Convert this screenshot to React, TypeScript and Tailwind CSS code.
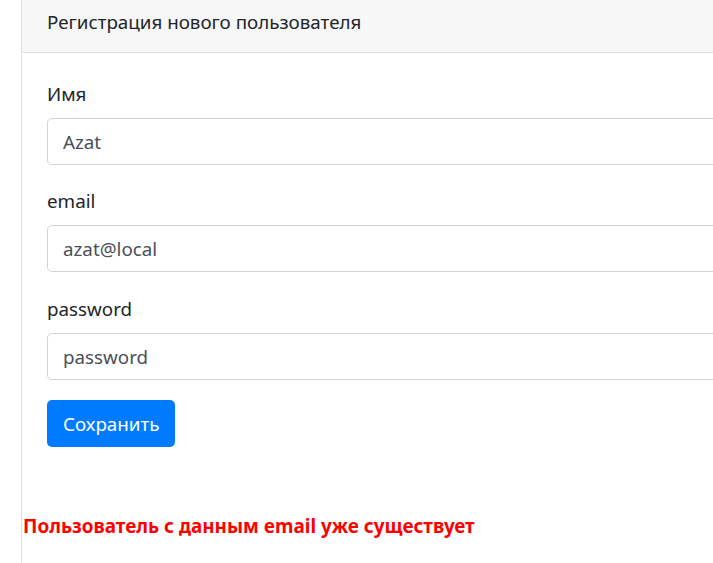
import React from "react";

export default function App() {
  const font = { fontFamily: '"Noto Sans", "Open Sans", sans-serif' };
  const fields = [
    { label: "Имя", value: "Azat", mb: "mb-[20px]" },
    { label: "email", value: "azat@local", mb: "mb-[21px]" },
    { label: "password", value: "password", mb: "mb-[20px]" },
  ];
  return (
    <div className="w-[713px] h-[563px] overflow-hidden bg-white" style={font}>
      <div className="ml-[21px] w-[900px] h-[563px] border-l border-[#dfdfdf] text-[#212529]">
        <div className="h-[53px] bg-[#f7f7f7] border-b border-[#dfdfdf] pl-[25px] pt-[7px] text-[18.8px] leading-[30px]">
          Регистрация нового пользователя
        </div>
        <div className="pt-[25px] pl-[25px]">
          {fields.map((f) => (
            <div key={f.label} className={f.mb}>
              <div className="text-[18.8px] leading-[32px] mb-[8px]">{f.label}</div>
              <div className="h-[47px] border border-[#ced4da] rounded-[5px] pl-[15px] pt-[2px] flex items-center text-[18.8px] text-[#495057]">
                {f.value}
              </div>
            </div>
          ))}
          <button className="h-[47px] pl-[16px] pr-[16px] bg-[#007bff] text-white rounded-[5px] text-[18.8px] leading-[30px]">
            Сохранить
          </button>
        </div>
        <div className="mt-[64px] pl-px text-[18.9px] leading-[30px] font-bold text-[#ff0000]">
          Пользователь с данным email уже существует
        </div>
      </div>
    </div>
  );
}
